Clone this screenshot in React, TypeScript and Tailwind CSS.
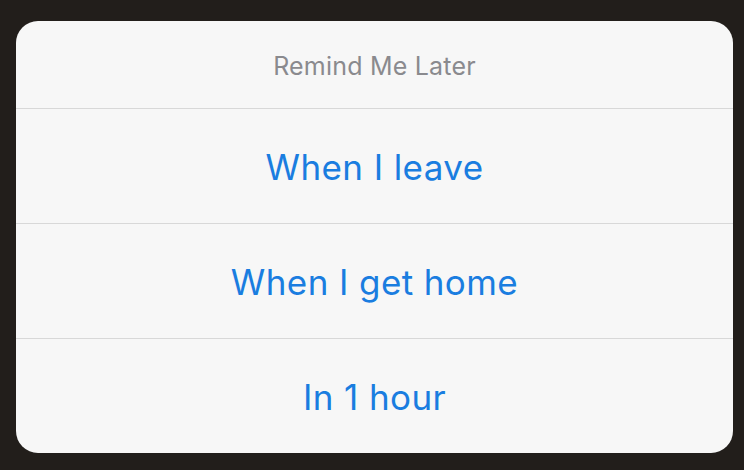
import React from "react";

export default function App() {
  const rows = ["When I leave", "When I get home", "In 1 hour"];
  return (
    <div
      className="w-[744px] h-[470px] bg-[#221e1b] pl-[16px] pt-[21px]"
      style={{ fontFamily: "Inter, 'Liberation Sans', sans-serif" }}
    >
      <div className="w-[717px] h-[432px] rounded-[22px] bg-[#f7f7f7] overflow-hidden flex flex-col">
        <div className="h-[88px] flex items-center justify-center border-b border-[#d8d8d8] pt-[4px]">
          <span className="text-[25px] text-[#8a8a8e] tracking-[0.2px]">Remind Me Later</span>
        </div>
        {rows.map((r, i) => (
          <div
            key={r}
            className={
              i < rows.length - 1
                ? "h-[115px] flex items-center justify-center border-b border-[#d8d8d8] pt-[2px]"
                : "flex-1 flex items-center justify-center pt-[2px]"
            }
          >
            <span className="text-[35px] text-[#1a7de0] tracking-[0.4px]">{r}</span>
          </div>
        ))}
      </div>
    </div>
  );
}
